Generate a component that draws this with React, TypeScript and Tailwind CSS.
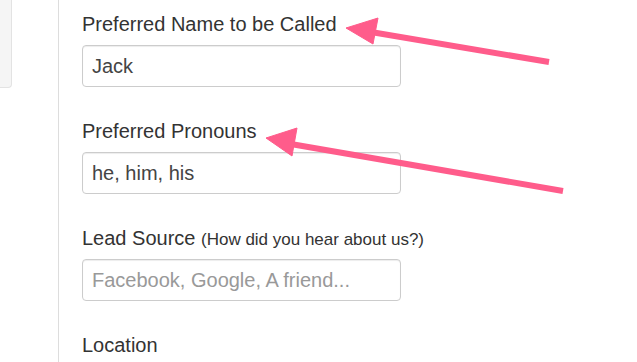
import type { ReactNode } from 'react';

const FONT = { fontFamily: '"Liberation Sans", Arial, sans-serif' };

interface FieldProps {
  label: ReactNode;
  value?: string;
  placeholder?: string;
}

function Field({ label, value, placeholder }: FieldProps) {
  return (
    <div className="mb-[34px]">
      <label className="mb-[11px] block h-[20px] text-[20px] leading-[20px] text-[#333]">{label}</label>
      <input
        readOnly
        value={value ?? ''}
        placeholder={placeholder}
        className="block h-[42px] w-[319px] rounded-[4px] border border-[#ccc] bg-white px-[9px] text-[20px] text-[#444] shadow-[inset_0_1px_1px_rgba(0,0,0,0.075)] outline-none placeholder:text-[#999]"
        style={FONT}
      />
    </div>
  );
}

function Arrows() {
  return (
    <svg className="pointer-events-none absolute inset-0" width="637" height="362" viewBox="0 0 637 362">
      <g fill="#ff5c8b" stroke="#ff5c8b">
        <line x1="365" y1="31" x2="549" y2="62" strokeWidth="6" />
        <polygon points="346,28 378,18 373,44" strokeWidth="1" strokeLinejoin="round" />
        <line x1="285" y1="143" x2="563" y2="191" strokeWidth="6" />
        <polygon points="266,138 297,128 292,156" strokeWidth="1" strokeLinejoin="round" />
      </g>
    </svg>
  );
}

export default function App() {
  return (
    <div className="relative flex h-[362px] w-[637px] overflow-hidden bg-white" style={FONT}>
      <div className="w-[58px] shrink-0">
        <div className="h-[88px] w-[12px] rounded-br-[4px] border-r border-b border-[#e3e3e3] bg-[#f5f5f5]" />
      </div>
      <div className="flex-1 border-l border-[#ddd] pt-[14px] pl-[23px]">
        <Field label="Preferred Name to be Called" value="Jack" />
        <Field label="Preferred Pronouns" value="he, him, his" />
        <Field
          label={
            <>
              Lead Source <span className="text-[17px]">(How did you hear about us?)</span>
            </>
          }
          placeholder="Facebook, Google, A friend..."
        />
        <label className="block h-[20px] text-[20px] leading-[20px] text-[#333]">Location</label>
      </div>
      <Arrows />
    </div>
  );
}
